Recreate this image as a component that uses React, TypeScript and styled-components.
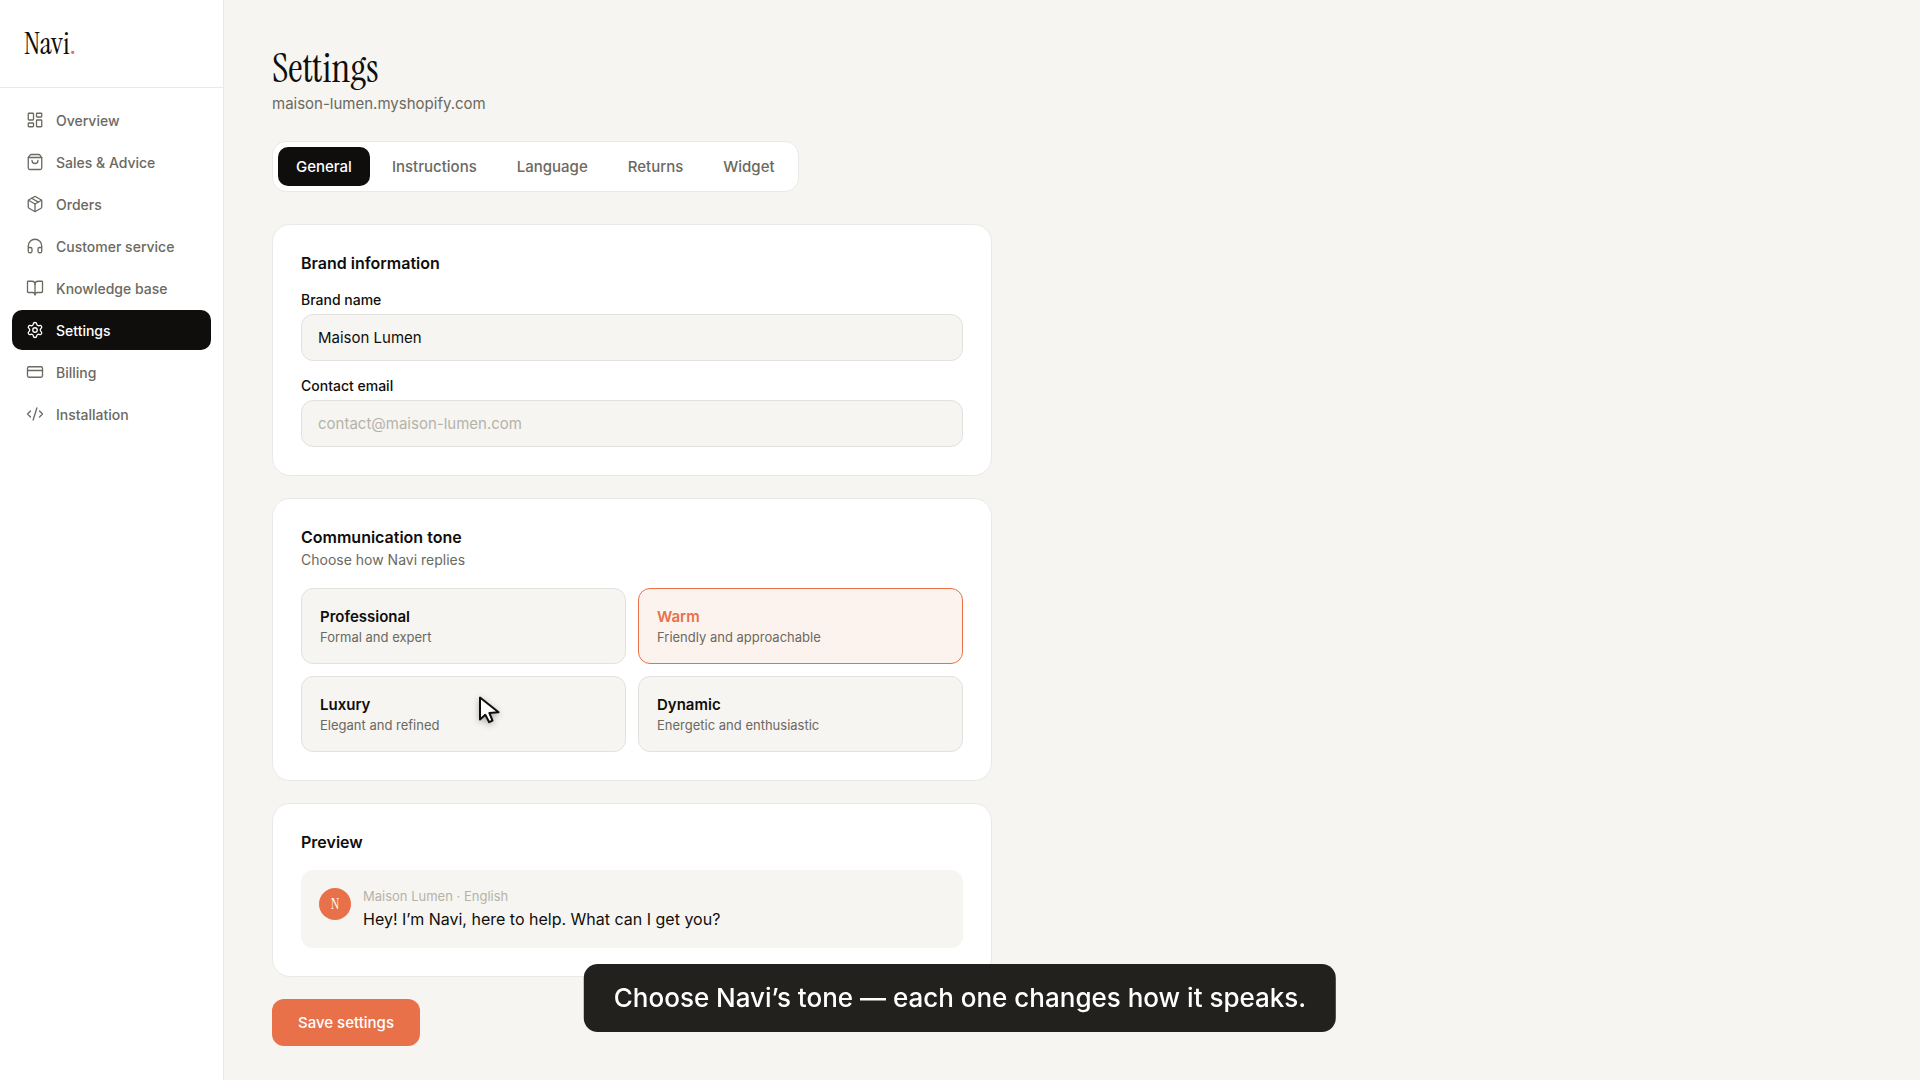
import React, { useState } from 'react';
import styled, { createGlobalStyle } from 'styled-components';
import {
  LayoutDashboard,
  ShoppingBag,
  Package,
  Headphones,
  BookOpen,
  Settings,
  CreditCard,
  CodeXml,
} from 'lucide-react';

const color = {
  ink: '#0f0e0c',
  muted: '#6b6960',
  faint: '#b5b3a9',
  page: '#f6f5f1',
  line: '#e9e9e7',
  field: '#e1e1dd',
  accent: '#e8714a',
  accentSoft: '#fdf3ee',
};

const serif = "'Instrument Serif', 'Liberation Serif', serif";

const GlobalStyle = createGlobalStyle`
  *, *::before, *::after { box-sizing: border-box; }
  body {
    margin: 0;
    background: ${color.page};
    color: ${color.ink};
    font-family: Inter, 'Liberation Sans', sans-serif;
    font-size: 15px;
    line-height: 20px;
    -webkit-font-smoothing: antialiased;
  }
  button, input { font: inherit; color: inherit; }
  h1, h2, p { margin: 0; }
`;

const Shell = styled.div`
  display: flex;
  min-height: 100vh;
  position: relative;
`;

const Sidebar = styled.aside`
  flex: 0 0 224px;
  background: #fff;
  border-right: 1px solid ${color.line};
`;

const Brand = styled.div`
  display: flex;
  align-items: center;
  height: 88px;
  padding: 0 24px;
  border-bottom: 1px solid ${color.line};
  font-family: ${serif};
  font-size: 30px;
  line-height: 32px;
`;

const BrandDot = styled.span`
  color: ${color.accent};
`;

const Nav = styled.nav`
  display: flex;
  flex-direction: column;
  gap: 2px;
  padding: 12px;
`;

const NavLink = styled.a<{ $active?: boolean }>`
  display: flex;
  align-items: center;
  gap: 12px;
  height: 40px;
  padding: 0 14px;
  border-radius: 10px;
  background: ${(p) => (p.$active ? color.ink : 'transparent')};
  color: ${(p) => (p.$active ? '#fff' : color.muted)};
  font-size: 14px;
  font-weight: 500;
  text-decoration: none;
`;

const NavText = styled.span`
  padding-top: 2px;
`;

const Main = styled.main`
  flex: 1;
  min-width: 0;
  padding: 44px 48px 32px;
`;

const Title = styled.h1`
  font-family: ${serif};
  font-size: 40px;
  font-weight: 400;
  line-height: 48px;
`;

const Domain = styled.p`
  color: ${color.muted};
  line-height: 24px;
`;

const Tabs = styled.div`
  display: flex;
  width: fit-content;
  gap: 4px;
  margin: 25px 0 32px;
  padding: 5px;
  background: #fff;
  border: 1px solid ${color.line};
  border-radius: 14px;
`;

const Tab = styled.button<{ $active: boolean }>`
  height: 39px;
  padding: 0 18px;
  border: 0;
  border-radius: 10px;
  background: ${(p) => (p.$active ? color.ink : 'transparent')};
  color: ${(p) => (p.$active ? '#fff' : color.muted)};
  font-weight: 500;
  cursor: pointer;
`;

const Form = styled.form`
  display: flex;
  flex-direction: column;
  gap: 22px;
  max-width: 720px;
`;

const Card = styled.section`
  padding: 28px;
  background: #fff;
  border: 1px solid ${color.line};
  border-radius: 18px;
`;

const CardTitle = styled.h2`
  font-size: 16px;
  font-weight: 600;
  line-height: 20px;
`;

const CardHint = styled.p`
  margin-top: 3px;
  color: ${color.muted};
  font-size: 14px;
`;

const CardBody = styled.div`
  display: grid;
  gap: 16px;
  margin-top: 18px;
`;

const Field = styled.div`
  display: flex;
  flex-direction: column;
  gap: 5px;
`;

const Label = styled.label`
  font-size: 14px;
  font-weight: 500;
  line-height: 18px;
`;

const TextInput = styled.input`
  width: 100%;
  height: 47px;
  padding: 0 16px;
  background: ${color.page};
  border: 1px solid ${color.field};
  border-radius: 12px;
  outline: none;
  &::placeholder { color: ${color.faint}; opacity: 1; }
`;

const ToneGrid = styled.div`
  display: grid;
  grid-template-columns: 1fr 1fr;
  gap: 12px;
  margin-top: 18px;
`;

const Tone = styled.button<{ $active: boolean }>`
  display: flex;
  flex-direction: column;
  padding: 18px 18px 16px;
  text-align: left;
  background: ${(p) => (p.$active ? color.accentSoft : color.page)};
  border: 1px solid ${(p) => (p.$active ? color.accent : color.field)};
  border-radius: 12px;
  cursor: pointer;
`;

const ToneName = styled.span<{ $active: boolean }>`
  color: ${(p) => (p.$active ? color.accent : color.ink)};
  font-weight: 600;
  line-height: 20px;
`;

const ToneHint = styled.span`
  color: ${color.muted};
  font-size: 13px;
  line-height: 20px;
`;

const Message = styled.div`
  display: flex;
  gap: 12px;
  padding: 18px;
  background: ${color.page};
  border-radius: 12px;
`;

const Avatar = styled.span`
  display: grid;
  place-items: center;
  flex: none;
  width: 32px;
  height: 32px;
  border-radius: 50%;
  background: ${color.accent};
  color: #fff;
  font-family: ${serif};
  font-size: 16px;
`;

const MessageMeta = styled.p`
  color: ${color.faint};
  font-size: 13px;
  line-height: 16px;
`;

const MessageText = styled.p`
  margin-top: 4px;
  font-size: 16px;
  line-height: 22px;
`;

const SaveButton = styled.button`
  align-self: flex-start;
  height: 47px;
  padding: 0 26px;
  border: 0;
  border-radius: 12px;
  background: ${color.accent};
  color: #fff;
  font-weight: 500;
  cursor: pointer;
`;

const Caption = styled.div`
  position: fixed;
  bottom: 48px;
  left: 50%;
  transform: translateX(-50%);
  padding: 16px 30px;
  border-radius: 14px;
  background: rgba(15, 14, 12, 0.92);
  color: #fff;
  font-size: 26px;
  font-weight: 500;
  line-height: 36px;
  white-space: nowrap;
`;

const Pointer = styled.svg`
  position: absolute;
  left: 476px;
  top: 694px;
  filter: drop-shadow(0 2px 3px rgba(0, 0, 0, 0.3));
  pointer-events: none;
`;

const navItems = [
  { name: 'Overview', Icon: LayoutDashboard },
  { name: 'Sales & Advice', Icon: ShoppingBag },
  { name: 'Orders', Icon: Package },
  { name: 'Customer service', Icon: Headphones },
  { name: 'Knowledge base', Icon: BookOpen },
  { name: 'Settings', Icon: Settings },
  { name: 'Billing', Icon: CreditCard },
  { name: 'Installation', Icon: CodeXml },
];

const tabNames = ['General', 'Instructions', 'Language', 'Returns', 'Widget'];

const tones = [
  { name: 'Professional', hint: 'Formal and expert' },
  { name: 'Warm', hint: 'Friendly and approachable' },
  { name: 'Luxury', hint: 'Elegant and refined' },
  { name: 'Dynamic', hint: 'Energetic and enthusiastic' },
];

export default function App() {
  const [tab, setTab] = useState('General');
  const [tone, setTone] = useState('Warm');

  return (
    <>
      <GlobalStyle />
      <Shell>
        <Sidebar>
          <Brand>
            Navi<BrandDot>.</BrandDot>
          </Brand>
          <Nav>
            {navItems.map(({ name, Icon }) => (
              <NavLink key={name} href="#" $active={name === 'Settings'}>
                <Icon size={18} strokeWidth={1.75} />
                <NavText>{name}</NavText>
              </NavLink>
            ))}
          </Nav>
        </Sidebar>

        <Main>
          <Title>Settings</Title>
          <Domain>maison-lumen.myshopify.com</Domain>

          <Tabs role="tablist">
            {tabNames.map((name) => (
              <Tab
                key={name}
                type="button"
                role="tab"
                aria-selected={tab === name}
                $active={tab === name}
                onClick={() => setTab(name)}
              >
                {name}
              </Tab>
            ))}
          </Tabs>

          <Form onSubmit={(e) => e.preventDefault()}>
            <Card>
              <CardTitle>Brand information</CardTitle>
              <CardBody>
                <Field>
                  <Label htmlFor="brand">Brand name</Label>
                  <TextInput id="brand" defaultValue="Maison Lumen" />
                </Field>
                <Field>
                  <Label htmlFor="email">Contact email</Label>
                  <TextInput id="email" type="email" placeholder="contact@maison-lumen.com" />
                </Field>
              </CardBody>
            </Card>

            <Card>
              <CardTitle>Communication tone</CardTitle>
              <CardHint>Choose how Navi replies</CardHint>
              <ToneGrid>
                {tones.map(({ name, hint }) => (
                  <Tone
                    key={name}
                    type="button"
                    aria-pressed={tone === name}
                    $active={tone === name}
                    onClick={() => setTone(name)}
                  >
                    <ToneName $active={tone === name}>{name}</ToneName>
                    <ToneHint>{hint}</ToneHint>
                  </Tone>
                ))}
              </ToneGrid>
            </Card>

            <Card>
              <CardTitle>Preview</CardTitle>
              <CardBody>
                <Message>
                  <Avatar>N</Avatar>
                  <div>
                    <MessageMeta>Maison Lumen · English</MessageMeta>
                    <MessageText>Hey! I’m Navi, here to help. What can I get you?</MessageText>
                  </div>
                </Message>
              </CardBody>
            </Card>

            <SaveButton type="submit">Save settings</SaveButton>
          </Form>
        </Main>

        <Pointer width="28" height="32" viewBox="0 0 28 32" aria-hidden="true">
          <path
            d="M4 3.5 L4 25.5 L9.3 20.8 L13.2 28.2 L16.5 26.6 L13.4 19 L22.6 18.2 Z"
            fill="#fff"
            stroke={color.ink}
            strokeWidth="2"
            strokeLinejoin="round"
          />
        </Pointer>
      </Shell>
      <Caption>Choose Navi’s tone — each one changes how it speaks.</Caption>
    </>
  );
}
